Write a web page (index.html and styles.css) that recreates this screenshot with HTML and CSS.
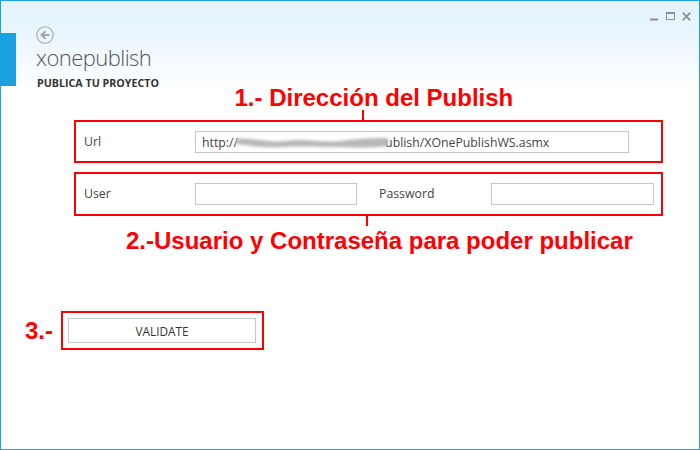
FILE: index.html
```html
<!DOCTYPE html>
<html lang="es">
<head>
<meta charset="utf-8">
<title>xonepublish</title>
<link rel="stylesheet" href="styles.css">
</head>
<body>
<div class="window">
  <div class="tab"></div>
  <div class="controls">
    <svg class="ctl" width="9" height="9" viewBox="0 0 9 9"><rect x="0" y="6.5" width="8" height="2" fill="#8e8e8e"/></svg>
    <svg class="ctl" width="9" height="9" viewBox="0 0 9 9"><rect x="0.5" y="0.5" width="8" height="7" fill="none" stroke="#8e8e8e"/><rect x="0" y="0" width="9" height="2" fill="#8e8e8e"/></svg>
    <svg class="ctl" width="9" height="9" viewBox="0 0 9 9"><path d="M0.7 0.7 L8.3 8.3 M8.3 0.7 L0.7 8.3" stroke="#8e8e8e" stroke-width="1.7" fill="none"/></svg>
  </div>
  <header class="head">
    <svg class="back" width="18" height="18" viewBox="0 0 18 18"><circle cx="9" cy="9" r="8.2" fill="none" stroke="#a6a6a6" stroke-width="1.1"/><path d="M13.5 9 H6.5 M9.5 5.2 L5.5 9 L9.5 12.8" fill="none" stroke="#a6a6a6" stroke-width="2"/></svg>
    <h1 class="title">xonepublish</h1>
    <h2 class="subtitle">PUBLICA TU PROYECTO</h2>
  </header>
  <p class="note note-one">1.- Dirección del Publish</p>
  <section class="box box-url">
    <span class="label label-url">Url</span>
    <div class="input input-url">http://<svg class="smudge" width="154" height="20" viewBox="0 0 154 20"><path d="M0 7 C15 5 30 11 50 9 C70 6 85 11 105 9 C125 6 140 6 152 6 L152 14 C135 16 120 16 100 15 C80 15 65 14 50 15 C30 16 15 14 0 12 Z" fill="#b8b8b8"/></svg>ublish/XOnePublishWS.asmx</div>
  </section>
  <section class="box box-cred">
    <span class="label label-user">User</span>
    <div class="input input-user"></div>
    <span class="label label-pass">Password</span>
    <div class="input input-pass"></div>
  </section>
  <p class="note note-two">2.-Usuario y Contraseña para poder publicar</p>
  <div class="validate-row">
    <span class="note note-three">3.-</span>
    <div class="validate-box"><button class="validate" type="button">VALIDATE</button></div>
  </div>
</div>
</body>
</html>
```
FILE: styles.css
```css
* { box-sizing: border-box; }
html, body { margin: 0; padding: 0; }
body { width: 700px; height: 450px; overflow: hidden; background: #fff; font-family: "Open Sans", "Noto Sans", sans-serif; }
.window {
  position: relative;
  width: 700px;
  height: 450px;
  border: 1px solid #1ba1e2;
  background: linear-gradient(to bottom, #e3f3fc 0, #e8f5fd 30px, #ffffff 88px);
  overflow: hidden;
}
.tab { position: absolute; left: -1px; top: 32px; width: 16px; height: 53px; background: #1ba1e2; }
.controls { display: flex; justify-content: flex-end; gap: 7px; height: 11px; margin-top: 11px; padding-right: 8px; }
.ctl { display: block; }
.head { margin: 3px 0 0 35px; height: 60px; }
.back { display: block; }
.title { margin: -1px 0 0; font-size: 22px; font-weight: 300; line-height: 28px; color: #555; letter-spacing: -0.55px; }
.subtitle { margin: 5px 0 0 1px; font-size: 10.7px; font-weight: 700; line-height: 14px; color: #333; white-space: nowrap; }
.note { margin: 0; font-family: "Liberation Sans", Arial, sans-serif; font-weight: 700; font-size: 24px; line-height: 24px; color: #f00; white-space: nowrap; }
.note-one { margin: 0 0 0 233.5px; height: 34px; }
.box { position: relative; width: 589px; height: 43px; margin-left: 73px; border: 2px solid #f00; display: flex; align-items: center; font-size: 12.3px; color: #444; }
.box-url::before { content: ""; position: absolute; left: 286px; top: -12px; width: 2px; height: 10px; background: #f00; }
.box-cred { margin-top: 9px; height: 44px; }
.box-cred::after { content: ""; position: absolute; left: 290px; bottom: -12px; width: 2px; height: 10px; background: #f00; }
.label { display: block; line-height: 16px; color: #444; }
.label-url { width: 119px; padding-left: 8px; }
.label-user { width: 119px; padding-left: 8px; }
.label-pass { width: 134px; padding-left: 22px; }
.input { height: 22px; border: 1px solid #c8c8c8; background: #fff; line-height: 22px; padding-left: 6px; color: #444; white-space: nowrap; }
.input-url { width: 434px; display: flex; }
.input-user { width: 162px; }
.input-pass { width: 163px; }
.smudge { display: block; flex: none; margin: 0 -5px 0 -2px; filter: blur(1.5px); }
.note-two { margin: 13px 0 0 125px; height: 24px; }
.validate-row { display: flex; align-items: center; margin: 58px 0 0 24px; }
.note-three { width: 36px; }
.validate-box { width: 203px; height: 39px; border: 2px solid #f00; padding: 5px; }
.validate { display: block; width: 188px; height: 25px; margin: 0; padding: 0; border: 1px solid #c8c8c8; background: #fff; font-family: "Open Sans", "Noto Sans", sans-serif; font-size: 11.8px; color: #333; }
```
